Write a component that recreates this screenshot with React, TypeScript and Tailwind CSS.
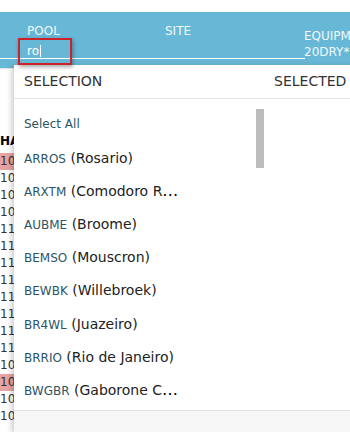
import React from 'react';

const items: [string, string][] = [
  ['ARROS', '(Rosario)'],
  ['ARXTM', '(Comodoro Rivadavia)'],
  ['AUBME', '(Broome)'],
  ['BEMSO', '(Mouscron)'],
  ['BEWBK', '(Willebroek)'],
  ['BR4WL', '(Juazeiro)'],
  ['BRRIO', '(Rio de Janeiro)'],
  ['BWGBR', '(Gaborone Container Terminal)'],
];

const rows = ['10-', '10-', '10-', '10-', '11-', '11-', '11-', '11-', '11-', '11-', '11-', '11-', '10-', '10-', '10-', '10-'];
const pink = [0, 13];

const App: React.FC = () => {
  return (
    <div
      className="relative w-[350px] h-[432px] overflow-hidden bg-white"
      style={{ fontFamily: '"DejaVu Sans", Verdana, sans-serif' }}
    >
      <div className="h-[12px]" />
      {/* header bar */}
      <div className="relative h-[56px] bg-[#67b7d6] text-[12px] text-[#f2f9fc]">
        <div className="flex">
          <div className="w-[165px] shrink-0 pl-[27px] pt-[12px]">
            <div className="leading-[14px]">POOL</div>
            <div className="flex items-center leading-[14px] mt-[6px] text-white">
              ro<span className="ml-[1px] w-px h-[12px] bg-white" />
            </div>
          </div>
          <div className="w-[139px] shrink-0 pt-[12px] leading-[14px]">SITE</div>
          <div className="shrink-0 pt-[17px] leading-[14px] whitespace-nowrap">
            <div>EQUIPMENT</div>
            <div className="mt-[2px]">20DRY*</div>
          </div>
        </div>
        <div className="absolute left-0 top-[46px] w-[305px] h-px bg-white" />
      </div>

      {/* background table */}
      <div className="border-t border-[#e6e6e6] text-[12px] text-[#333]">
        <div className="h-[65px]" />
        <div className="font-bold text-black leading-[14px] h-[19px]">HAZ</div>
        <div>
          {rows.map((r, i) => (
            <div
              key={i}
              className={`h-[17px] leading-[17px] ${pink.includes(i) ? 'bg-[#e9a3a3]' : ''}`}
            >
              {r}
            </div>
          ))}
        </div>
      </div>

      {/* dropdown panel */}
      <div className="absolute left-[14px] top-[65px] w-[360px] bottom-0 bg-white shadow-[-2px_2px_6px_rgba(0,0,0,0.22)] flex flex-col">
        <div className="flex h-[34px] items-center border-b border-[#e6e6e6] text-[14px] text-[#333]">
          <div className="w-[260px] shrink-0 pl-[10px]">SELECTION</div>
          <div className="whitespace-nowrap">SELECTED</div>
        </div>
        <div className="relative flex-1 pt-[7px]">
          <div className="h-[35px] flex items-center pl-[10px] text-[12px] text-[#2c5466]">Select All</div>
          {items.map(([code, name]) => (
            <div key={code} className="h-[33.2px] flex items-center pl-[10px]">
              <div className="w-[157px] truncate whitespace-nowrap">
                <span className="text-[12px] text-[#2c5466]">{code}</span>
                <span className="text-[14px] text-[#222]"> {name}</span>
              </div>
            </div>
          ))}
          <div className="absolute left-[242px] top-[10px] w-[8px] h-[59px] bg-[#bdbdbd]" />
        </div>
        <div className="h-[22px] border-t border-[#e2e2e2] bg-[#f7f7f7]" />
      </div>

      {/* annotation box */}
      <div className="absolute left-[18px] top-[38px] w-[54px] h-[27px] border-2 border-[#cc2229] shadow-[1px_2px_4px_rgba(0,0,0,0.35)]" />
    </div>
  );
};

export default App;
